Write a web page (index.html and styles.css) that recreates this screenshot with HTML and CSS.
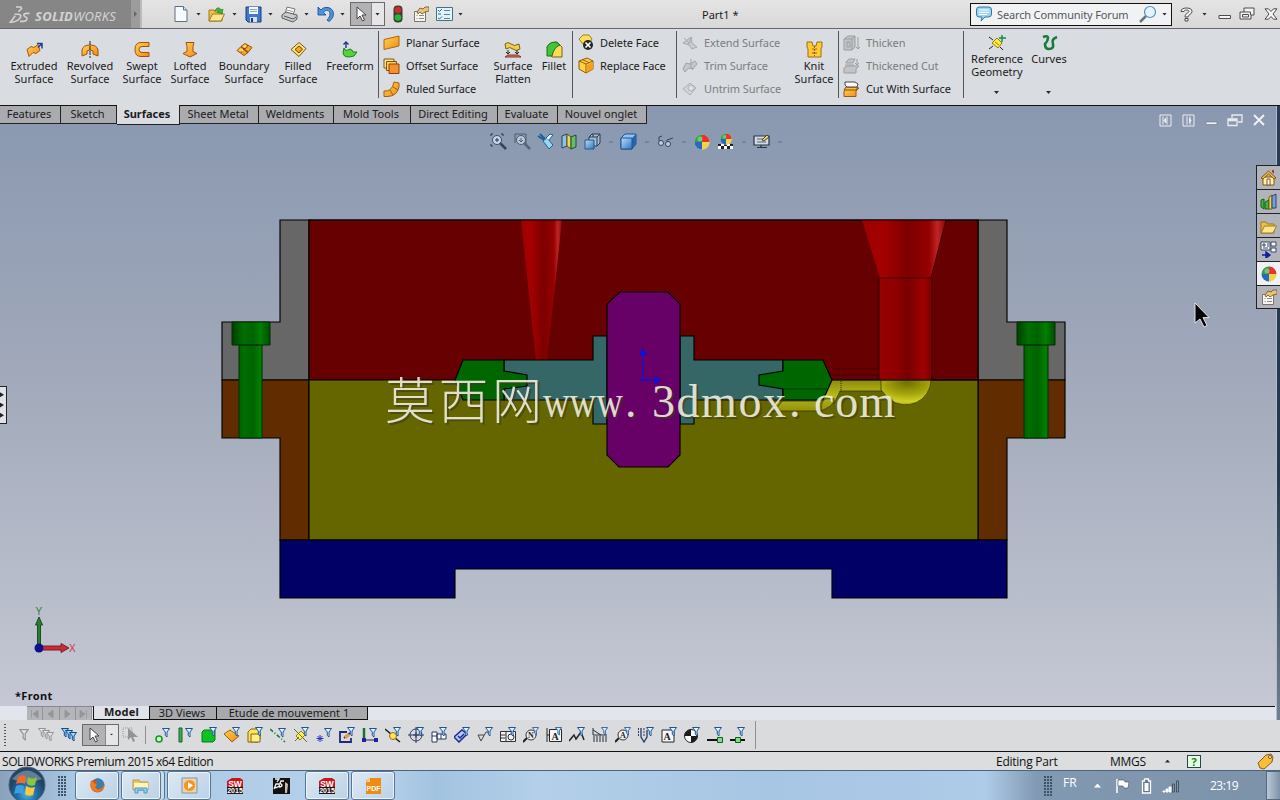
FILE: index.html
```
<!DOCTYPE html>
<html lang="en">
<head>
    <meta charset="UTF-8">
    <meta name="viewport" content="width=device-width, initial-scale=1.0">
    <title>Part1 - SOLIDWORKS</title>
    <link rel="stylesheet" href="styles.css">
</head>
<body>
    <!-- shared icon shapes -->
    <svg class="defs" width="0" height="0">
        <defs>
            <linearGradient id="gold" x1="0" y1="0" x2="1" y2="1"><stop offset="0" stop-color="#ffd257"/><stop offset="1" stop-color="#f08a12"/></linearGradient>
            <linearGradient id="sky" x1="0" y1="0" x2="1" y2="1"><stop offset="0" stop-color="#b9defa"/><stop offset="1" stop-color="#2f76c4"/></linearGradient>
        </defs>
        <symbol id="funnel" viewBox="0 0 8 10"><path d="M.5.5h7L5 4v5L3.300 7.500V4z" fill="#e4f3ff" stroke="#1c5596"/></symbol>
        <symbol id="cursor" viewBox="0 0 12 16"><path d="M2 1v12l3-3 2.500 5 2-1L7 9h4z" fill="#fff" stroke="#444"/></symbol>
        <symbol id="ball" viewBox="0 0 16 16"><circle cx="8" cy="8" r="7.500" fill="#ddd"/><path d="M8 8V.5A7.500 7.500 0 0 0 .5 8z" fill="#35a045"/><path d="M8 8V.5A7.500 7.500 0 0 1 15.500 8z" fill="#e5342b"/><path d="M8 8H.5A7.500 7.500 0 0 0 8 15.500z" fill="#2868bd"/><path d="M8 8h7.500A7.500 7.500 0 0 1 8 15.500z" fill="#f1d34a"/><circle cx="6" cy="5" r="2.500" fill="#fff" opacity=".35"/></symbol>
        <symbol id="props" viewBox="0 0 16 16"><path d="M1.500 5.500h11v10h-11z" fill="#f6f5f0" stroke="#77766f"/><path d="M3.500 9.500h1m1.500 0h5m-7.500 3h1m1.500 0h5" stroke="#8b8b8b"/><path d="M4 6l3-4 3 1 2-2h4v4l-4 1-3 2-2-2-2 2z" fill="#e9c27a" stroke="#6c4e24" stroke-width=".8"/></symbol>
        <symbol id="restore" viewBox="0 0 16 14"><path d="M5 1h10v7h-3v4H1V5h4z" fill="#f3f3f5" stroke="#4c4c4e"/><path d="M5 5h6.500v3M3.500 7.500h6v2.500h-6z" fill="none" stroke="#4c4c4e"/></symbol>
        <symbol id="close" viewBox="0 0 14 12"><path d="M1 .8h3.500L7 3.500 9.500.8H13L9 6l4 5.200H9.500L7 8.500 4.500 11.200H1L5 6z" fill="#f5f5f7" stroke="#4c4c4e"/></symbol>
        <symbol id="min" viewBox="0 0 14 12"><path d="M1 7.500h11.500v3H1z" fill="#f5f5f7" stroke="#4c4c4e"/></symbol>
        <symbol id="open" viewBox="0 0 18 16"><path d="M1 15V4h5l1.500 2H14v9z" fill="#f0bf45" stroke="#a07a1c"/><path d="M1 15l3.500-7h12L13 15z" fill="#ffe68d" stroke="#a07a1c"/></symbol>
        <symbol id="swbox" viewBox="0 0 16 16"><path d="M0 3l5-3h8l3 2v8H0z" fill="#c8161c"/><path d="M0 9h16v7H0z" fill="#1c1415"/></symbol>
    </svg>

    <header class="titlebar">
        <div class="brand">
            <svg width="30" height="22" viewBox="0 0 30 22"><path d="M10 1h6l1 2-4 4M8 10h4c5 0 5 3 2 6-3 3-6 4-11 4l6-8M27 9h-4c-4 0-4 2-2 4l2 1c2 2 0 5-4 5h-4" fill="none" stroke="#d2d2d2" stroke-width="2"/></svg>
            <span><b>SOLID</b>WORKS</span>
        </div>
        <div class="brand-arrow"></div>
        <div class="quick">
            <span class="tool"><svg width="14" height="16" viewBox="0 0 14 16"><path d="M1 .5h8.500l3.500 3.500v11.500H1z" fill="#f6fbff" stroke="#5c6f80"/><path d="M9.500.5V4H13" fill="#cfe0ee" stroke="#5c6f80"/></svg></span><i class="drop"></i>
            <span class="tool"><svg width="18" height="16"><use href="#open"/><path d="M7 5c1-4 5-4 6-1l2-1-1 5-5-2 2-1c-1-1-2-1-4 0z" fill="#43b438" stroke="#1c7a1c" stroke-width=".6"/></svg></span><i class="drop"></i>
            <span class="tool"><svg width="17" height="17" viewBox="0 0 17 17"><path d="M1 1h15v15H3l-2-2z" fill="#3f79cf" stroke="#173b85"/><path d="M4 1h9v7H4z" fill="#f4f8fc"/><path d="M5 3.500h7M5 5.500h7" stroke="#8aa4c4"/><path d="M5 11h7v5H5z" fill="#d7dfe8"/><path d="M6 12h2v4H6z" fill="#173b85"/></svg></span><i class="drop"></i>
            <span class="tool"><svg width="17" height="17" viewBox="0 0 17 17"><path d="M4 8l2-7 8 2-2 6z" fill="#fff" stroke="#777"/><path d="M1 9l4-3 11 3v4l-4 3-11-4z" fill="#c9ccd0" stroke="#55585c"/><path d="M3 10l9 3 3-2" fill="none" stroke="#55585c"/><path d="M6 4l6 1.500" stroke="#999"/></svg></span><i class="drop"></i>
            <span class="tool"><svg width="17" height="16" viewBox="0 0 17 16"><path d="M1 1v8h8L6.500 6.500C9 3 13 4 13 8c0 2-1 4-3 6l2 1.500c7-5 5-13-1-14C8 1 5.500 2 4 4z" fill="#4f93dd" stroke="#1c5199" stroke-width=".9"/></svg></span><i class="drop"></i>
        </div>
        <div class="picker"><span><svg width="12" height="16"><use href="#cursor"/></svg></span><i class="drop"></i></div>
        <svg class="traffic" width="10" height="18" viewBox="0 0 10 18"><rect x=".5" y=".5" width="9" height="17" rx="4" fill="#3b3b3b"/><circle cx="5" cy="5" r="3.300" fill="#d22b26"/><circle cx="5" cy="12.500" r="3.300" fill="#21b835"/></svg>
        <svg class="opt" width="16" height="16"><use href="#props"/></svg>
        <svg class="opt" width="17" height="16" viewBox="0 0 17 16"><path d="M.5 1.500h16v13H.5z" fill="#e4f3fb" stroke="#42708f"/><path d="M2 4l1.500 1.500L6 3M2 8h3m-3 4l1.500 1L6 10.500" fill="none" stroke="#1b7291"/><path d="M8 4.500h6m-6 4h6m-6 4h6" stroke="#52859f"/></svg>
        <i class="drop"></i>
        <div class="doc-title">Part1 *</div>
        <div class="search">
            <svg width="16" height="16" viewBox="0 0 16 16"><path d="M3 1h10q2.500 0 2.500 3v4q0 3-3 3H9l-4 4 1-4H3Q.5 11 .5 8V4Q.5 1 3 1z" fill="#9fd3ef" stroke="#277cab"/><path d="M3 4h10M3 6.300h10M3 8.500h8" stroke="#fff"/></svg>
            <span>Search Community Forum</span>
            <svg width="18" height="18" viewBox="0 0 18 18"><path d="M7 11l-6 6" stroke="#657585" stroke-width="2.500"/><circle cx="11" cy="7" r="5.500" fill="#e4f5ff" stroke="#5591bd" stroke-width="1.200"/></svg>
            <i class="drop"></i>
        </div>
        <div class="winctl">
            <svg width="13" height="15" viewBox="0 0 13 15"><path d="M1 4.500Q1 1 6.500 1T12 4.500c0 3-4 3-4 5.500H5c0-4 4-4 4-5.500 0-2-5-2-5 0zM5 11.500h3V14H5z" fill="#f5f5f7" stroke="#4c4c4e"/></svg>
            <i class="drop"></i>
            <svg width="14" height="12"><use href="#min"/></svg>
            <svg width="16" height="14"><use href="#restore"/></svg>
            <svg width="14" height="12"><use href="#close"/></svg>
        </div>
    </header>

    <section class="ribbon">
        <div class="group first">
            <div class="big w56"><svg width="17" height="16" viewBox="0 0 17 16"><path d="M1 8l4-3 3 1 4-3 2 6-4 3-3-1-4 4z" fill="url(#gold)" stroke="#a45a0c"/><path d="M11 2h5v5M16 2l-4 4" fill="none" stroke="#233f8e" stroke-width="1.500"/></svg>Extruded<br>Surface</div>
            <div class="big w56"><svg width="18" height="17" viewBox="0 0 18 17"><path d="M1 15V9q1-5 8-5t8 5v6l-5-2v-3q-3-2-6 0v3z" fill="url(#gold)" stroke="#a4500c"/><path d="M9 0v17" stroke="#222" stroke-dasharray="4 1"/></svg>Revolved<br>Surface</div>
            <div class="big w48"><svg width="16" height="16" viewBox="0 0 16 16"><path d="M15 1v4H8Q5 5 5 8t3 3h7v4H7Q1 15 1 8t6-7z" fill="url(#gold)" stroke="#a4500c"/></svg>Swept<br>Surface</div>
            <div class="big w48"><svg width="16" height="16" viewBox="0 0 16 16"><path d="M4 1h8l-1 4v5l4 2-7 3.500L1 12l4-2V5z" fill="url(#gold)" stroke="#a4500c"/></svg>Lofted<br>Surface</div>
            <div class="big w60"><svg width="17" height="16" viewBox="0 0 17 16"><path d="M1 9l4-4 4-3 7 4-4 5-4 3z" fill="url(#gold)" stroke="#a4500c"/><path d="M5 5l7 6M12 4l-7 7" stroke="#8c430a" stroke-width="1.300"/><path d="M7 5l2-1.500L11 5 9 6.500zM4 8.500L6 7l2 2-2 1.500z" fill="#ffdc7c"/></svg>Boundary<br>Surface</div>
            <div class="big w48"><svg width="17" height="16" viewBox="0 0 17 16"><path d="M1 8l8-7 7 6-7 8z" fill="#ffe47b" stroke="#7c5512"/><path d="M5 8l4-3.500L12.500 7.500 9 11.500z" fill="#f5a81b" stroke="#5c430e"/></svg>Filled<br>Surface</div>
            <div class="big w56"><svg width="16" height="17" viewBox="0 0 16 17"><path d="M2 7q1 4 6 1 3 1 3 3h4l-3 4q-10 3-11-3z" fill="#5bd139" stroke="#168020"/><path d="M4 7V1M1.500 3.500L4 1l2.500 2.500" fill="none" stroke="#1e3983" stroke-width="1.400"/></svg>Freeform</div>
        </div>
        <div class="group g2">
            <div class="list">
                <div class="row"><svg width="17" height="16" viewBox="0 0 17 16"><path d="M1 4.500L16 1v10L1 14.500z" fill="url(#gold)" stroke="#b0660e"/></svg>Planar Surface</div>
                <div class="row"><svg width="17" height="16" viewBox="0 0 17 16"><path d="M1 1h10v9H1z" fill="#ffe59a" stroke="#80550e"/><path d="M3.500 3.500h10v9h-10z" fill="#ffcf5c" stroke="#80550e"/><path d="M6 6h10v9.500H6z" fill="#f6912a" stroke="#8c430e"/></svg>Offset Surface</div>
                <div class="row"><svg width="17" height="16" viewBox="0 0 17 16"><path d="M11 1l5 1v4q-2 9-11 9.500H1V10q8 1 10-9z" fill="url(#gold)" stroke="#a4600e"/><path d="M10 6l5 3M7 9l3 5" stroke="#a4600e"/></svg>Ruled Surface</div>
            </div>
            <div class="big w48"><svg width="18" height="17" viewBox="0 0 18 17"><path d="M1 3q3-3 6 0t8 0l1 5q-4 3-7 0t-7 0z" fill="#f2d043" stroke="#74631e"/><path d="M4 9v4m9-4v4M2 11l2 2 2-2m5 0l2 2 2-2" fill="none" stroke="#222"/><path d="M1 16l3-2h10l3 2z" fill="#dc8165" stroke="#803420"/></svg>Surface<br>Flatten</div>
            <div class="big w34"><svg width="17" height="17" viewBox="0 0 17 17"><path d="M1 6l4-4 6-1 5 5v10H6z" fill="#ffda52" stroke="#7b640e"/><path d="M1 15V6q2-5 9-5l4 3q-6 2-8 11z" fill="#42c33a" stroke="#16721d"/></svg>Fillet</div>
        </div>
        <div class="group g3">
            <div class="list">
                <div class="row"><svg width="16" height="17" viewBox="0 0 16 17"><path d="M1 5l4-4h6l3 4-3 5H5z" fill="#ffdf59" stroke="#9b811d"/><circle cx="10" cy="11" r="5" fill="#252525"/><path d="M7.500 8.500l5 5m0-5l-5 5" stroke="#fff" stroke-width="1.700"/></svg>Delete Face</div>
                <div class="row"><svg width="16" height="17" viewBox="0 0 16 17"><path d="M1 4l8-3 6 3v8l-7 4-7-4z" fill="#ffd240" stroke="#8d5a0b"/><path d="M1 4l7 3v9M8 7l7-3M4 2.500l7 3" fill="none" stroke="#a45a0b"/><path d="M9 8l6-3v7l-6 3z" fill="#f69f1c"/></svg>Replace Face</div>
            </div>
        </div>
        <div class="group g4">
            <div class="list">
                <div class="row off"><svg width="16" height="16" viewBox="0 0 16 16"><path d="M1 8l8-6 1 6 5 4-5 2-3-4z" fill="#c9cacc" stroke="#a8a9ac"/><path d="M2 3l5 5m3-6l-4 8" stroke="#a8a9ac"/></svg>Extend Surface</div>
                <div class="row off"><svg width="16" height="16" viewBox="0 0 16 16"><path d="M1 11l3-6 4 1 5-3 2 3-4 5-4-1-4 4z" fill="#c5c6c9" stroke="#a3a4a7"/><path d="M9 1v8l2 3" fill="none" stroke="#a3a4a7"/></svg>Trim Surface</div>
                <div class="row off"><svg width="16" height="16" viewBox="0 0 16 16"><path d="M1 8l7-6 6 5-6 7z" fill="#d3d4d7" stroke="#b0b1b4"/><circle cx="9" cy="7" r="3" fill="#dfe0e2" stroke="#b0b1b4"/></svg>Untrim Surface</div>
            </div>
            <div class="big w48 knit"><svg width="17" height="17" viewBox="0 0 17 17"><path d="M1 1h5l1 4h3l1-4h5v5l-1 2v8H2V8L1 6z" fill="#ffcb38" stroke="#a26d0b"/><path d="M8.500 5v10M6 8h5m-5 4h5" stroke="#a05a0b" stroke-dasharray="2 1"/></svg>Knit<br>Surface</div>
        </div>
        <div class="group g5">
            <div class="list">
                <div class="row off"><svg width="17" height="16" viewBox="0 0 17 16"><path d="M1 4l4-3h7v11l-3 3H1z" fill="#c3c4c7" stroke="#9c9da0"/><path d="M1 4h8v11M9 4l3-3M15 2v12m-2-2l2 2 2-2M4 7h3v5H4z" fill="none" stroke="#9c9da0"/></svg>Thicken</div>
                <div class="row off"><svg width="17" height="16" viewBox="0 0 17 16"><path d="M1 10l3-2h12l-3 3v4H1zM3 4l3-3h6l-2 4H3z" fill="#c3c4c7" stroke="#9c9da0"/><path d="M2 7h9m3-6v6m-2-2l2 2 2-2" fill="none" stroke="#9c9da0"/></svg>Thickened Cut</div>
                <div class="row"><svg width="17" height="16" viewBox="0 0 17 16"><path d="M1 10l3-3h12l-3 3v5.500H1z" fill="url(#gold)" stroke="#a4560e"/><path d="M3 6h12l-2 3H1z" fill="#ffb933" stroke="#855014"/><path d="M2 1h10l3 2-1 3H4L2 4z" fill="#fafafa" stroke="#444"/></svg>Cut With Surface</div>
            </div>
        </div>
        <div class="group g6">
            <div class="big w54 menu"><svg width="18" height="17" viewBox="0 0 18 17"><path d="M4 9l5-5 5 5-4 5z" fill="#ffec35" stroke="#8f7c16"/><path d="M1 3l4 3m-4 9l4-3m7 1l3 3" stroke="#222"/><path d="M14 1v7m-3-4h7" stroke="#14854d" stroke-width="1.400"/><path d="M7 8l4 3" stroke="#a2811d"/></svg>Reference<br>Geometry<i class="drop"></i></div>
            <div class="big w50 menu"><svg width="17" height="17" viewBox="0 0 17 17"><path d="M2 3q5-2 5 1 0 3-3 6 0 5 4 5 5 0 4-5-2-5 4-7" fill="none" stroke="#187a3b" stroke-width="2.600"/></svg>Curves<i class="drop"></i></div>
        </div>
    </section>

    <main class="viewport">
        <nav class="tabs">
            <a class="t1">Features</a><a class="t2">Sketch</a><a class="t3 active">Surfaces</a><a class="t4">Sheet Metal</a><a class="t5">Weldments</a><a class="t6">Mold Tools</a><a class="t7">Direct Editing</a><a class="t8">Evaluate</a><a class="t9">Nouvel onglet</a>
            <div class="docctl">
                <svg width="13" height="13" viewBox="0 0 13 13"><path d="M1 1h11v11H1z" fill="none" stroke="#eceef2"/><path d="M8 2.500v8M4 2.500v8M7 4L5 6.500 7 9" stroke="#eceef2" fill="#eceef2"/></svg>
                <svg width="13" height="13" viewBox="0 0 13 13"><path d="M1 1h11v11H1z" fill="none" stroke="#eceef2"/><path d="M5 2.500v8M8 2.500v8M7 4l2 2.500L7 9" stroke="#eceef2" fill="#eceef2"/></svg>
                <svg class="low" width="13" height="12"><path d="M1 8h11v2.500H1z" fill="#eff1f4" stroke="#66728a" stroke-width=".6"/></svg>
                <svg width="16" height="13" viewBox="0 0 16 13"><path d="M5 4V1h10v7h-4M1 5h9v6.500H1zM1 6.500h9" fill="none" stroke="#e9ebef" stroke-width="1.300"/></svg>
                <svg width="12" height="12" viewBox="0 0 12 12"><path d="M1 1l10 10M11 1L1 11" stroke="#f1f2f5" stroke-width="1.900"/></svg>
            </div>
        </nav>

        <div class="headsup">
            <span><svg width="17" height="17" viewBox="0 0 17 17"><path d="M10 10l6 6" stroke="#31425a" stroke-width="2.500"/><circle cx="7" cy="7" r="4.500" fill="#c4d7e8" stroke="#3c4e68"/><path d="M1 3V1h2m8 0h2v2M1 11v2h2m2-6h4m-2-2v4" fill="none" stroke="#27354b"/></svg></span>
            <span><svg width="17" height="17" viewBox="0 0 17 17"><path d="M10 10l6 6" stroke="#56657a" stroke-width="2.500"/><circle cx="7" cy="7" r="4.500" fill="#bac8d8" stroke="#4d5c71"/><path d="M1 1h11v10M1 1v9M7 5v4m-2-2l2 2 2-2" fill="none" stroke="#4d5c71"/></svg></span>
            <span><svg width="17" height="17" viewBox="0 0 17 17"><path d="M1 3l6 4M3 1l5 5" stroke="#206395" stroke-width="2"/><path d="M6 8l4-3 6 7-4 4z" fill="#9ad6f2" stroke="#206395"/><path d="M9 5l4-4 3 1-4 5" fill="#dff3ff" stroke="#245e87"/></svg></span>
            <span><svg width="16" height="17" viewBox="0 0 16 17"><path d="M1 3l5-2v12l-5 2z" fill="#8fc3e6" stroke="#23405e"/><path d="M6 1l4 3v12l-4-3z" fill="#f1d850" stroke="#575021"/><path d="M10 4l5-2v12l-5 2z" fill="#65bb73" stroke="#244d37"/></svg></span>
            <span><svg width="17" height="17" viewBox="0 0 17 17"><path d="M5 4l3-3h8v9l-3 3H5zM5 4h8v9M13 4l3-3M9 1v3" fill="#a9bed5" stroke="#26394f"/><path d="M1 7h9v9H1z" fill="url(#sky)" stroke="#275887"/></svg></span>
            <i></i>
            <span><svg width="17" height="17" viewBox="0 0 17 17"><path d="M1 5l4-4h11v10l-4 5H1z" fill="#90c5f3" stroke="#205292"/><path d="M12 5l4-4v10l-4 5z" fill="#2764ac"/><path d="M1 5h11v11H1z" fill="url(#sky)" stroke="#205292"/></svg></span>
            <i></i>
            <span><svg width="17" height="13" viewBox="0 0 17 13"><path d="M2 6V2l3-1m5 6V5l6-2" fill="none" stroke="#354559"/><circle cx="4" cy="8" r="2.500" fill="#bfd0df" stroke="#354559"/><circle cx="11" cy="9" r="2.500" fill="#bfd0df" stroke="#354559"/></svg></span>
            <i></i>
            <span><svg width="16" height="16"><use href="#ball"/></svg></span>
            <span><svg width="17" height="17" viewBox="0 0 17 17"><path d="M1 11h15v5H1z" fill="#fff"/><path d="M1 11h3v2h3v-2h3v2h3v-2h3v2h-3v3h-3v-3H7v3H4v-3H1z" fill="#202020"/><use href="#ball" x="3" y="0" width="12" height="12"/></svg></span>
            <i></i>
            <span><svg width="18" height="15" viewBox="0 0 18 15"><path d="M1 2h15v9H1zM4 13.500h10M8 11v2" fill="#d3dae2" stroke="#273445" stroke-width="1.200"/><path d="M4 5h8M4 8h9" stroke="#56636f"/><path d="M9 6l5-5 2 2-5 4z" fill="#ecd266" stroke="#4c4625"/></svg></span>
            <i></i>
        </div>

        <!-- mould section view, drawn in window pixels -->
        <svg class="scene" width="1280" height="601" viewBox="0 105 1280 601">
            <defs>
                <linearGradient id="bolt"><stop offset="0" stop-color="#003e00"/><stop offset=".3" stop-color="#007000"/><stop offset=".55" stop-color="#006200"/><stop offset=".75" stop-color="#008000"/><stop offset="1" stop-color="#004c00"/></linearGradient>
                <linearGradient id="sprue"><stop offset="0" stop-color="#a00000"/><stop offset=".25" stop-color="#a40000"/><stop offset=".55" stop-color="#7c0000"/><stop offset=".8" stop-color="#960000"/><stop offset=".9" stop-color="#c02525"/><stop offset="1" stop-color="#850808"/></linearGradient>
                <linearGradient id="tube"><stop offset="0" stop-color="#980000"/><stop offset=".3" stop-color="#8f0000"/><stop offset=".55" stop-color="#780000"/><stop offset=".85" stop-color="#a00000"/><stop offset="1" stop-color="#7c0000"/></linearGradient>
                <radialGradient id="bulb" cx=".52" cy=".1" r=".9"><stop offset="0" stop-color="#6f6f00"/><stop offset=".5" stop-color="#a3a30c"/><stop offset=".85" stop-color="#d0d024"/><stop offset="1" stop-color="#a2a210"/></radialGradient>
                <linearGradient id="runner" x2="0" y2="1"><stop offset="0" stop-color="#8c8c08"/><stop offset=".5" stop-color="#b9b920"/><stop offset="1" stop-color="#929208"/></linearGradient>
            </defs>
            <g stroke="#000" stroke-width="1.150">
                <path d="M280 220h29v160h-87v-58h58zM1007 220h-29v160h87v-58h-58z" fill="#676767"/>
                <path d="M222 380h87v160h-29V438h-58zM1065 380h-87v160h29V438h58z" fill="#602c00"/>
                <path d="M309 220h669v160H309z" fill="#670000"/>
                <path d="M309 380h669v160H309z" fill="#666600"/>
                <path d="M280 540h727v58H832v-29H455v29H280z" fill="#000067"/>
            </g>
            <g stroke="#003000">
                <path d="M232 322h38v23h-38zM239 345h23v93h-23z" fill="url(#bolt)"/>
                <path d="M1017 322h38v23h-38zM1024 345h24v93h-24z" fill="url(#bolt)"/>
            </g>
            <path d="M521 220h41l-15 140h-11z" fill="url(#sprue)"/>
            <path d="M862 220h84l-15 58h-51z" fill="url(#sprue)"/>
            <path d="M880 278h51v102h-51z" fill="url(#tube)"/>
            <path d="M880 278h51M878 278v102M932 278v102M946 220l-15 58" stroke="#3d0000" fill="none"/>
            <path d="M832 369h46M832 375h46" stroke="#4f0000"/>
            <path d="M882 380v11h-42q-7 20-24 20h-46l8-10h40l12-21z" fill="url(#runner)" stroke="#383800" stroke-width=".8"/>
            <path d="M881 380h50a25.500 25 0 0 1-42 19l-8-9z" fill="url(#bulb)" stroke="#383800" stroke-width=".8"/>
            <path d="M841 369v23" stroke="#332800" stroke-dasharray="1 1"/>
            <path d="M309 220h669M832 380h146" stroke="#0a0000"/>
            <g stroke="#000" stroke-width="1.150">
                <path d="M504 360h89v-24h14v88h-14v-24h-89zM783 360h-89v-24h-14v88h14v-24h89z" fill="#356767"/>
                <path d="M463 360h41v11l23 4v11l-23 3v11h-41l-8-20z" fill="#006700"/>
                <path d="M823 360h-40v11l-24 4v10l24 4v11h40l9-20z" fill="#006700"/>
                <path d="M620 292h48l12 12v151l-12 12h-49l-12-12V304z" fill="#670067"/>
            </g>
            <path d="M783 389h44" stroke="#003b00"/>
            <path d="M643 379v-28m-3 4l3-6 3 6zM640 380h15m0-3l5 3-5 3z" fill="#1111ec" stroke="#1111cf" stroke-width="1.300"/>
            <g class="watermark">
                <text class="cjk" x="385" y="419" textLength="157">莫西网</text>
                <text transform="translate(543 417) scale(.8 1)">www</text>
                <text x="625" y="417">.</text>
                <text x="652" y="417" textLength="134">3dmox</text>
                <text x="789" y="417">.</text>
                <text x="814" y="417" textLength="81">com</text>
            </g>
            <g class="triad">
                <path d="M37.500 647v-22h-2l3.500-8 3.500 8h-2v22z" fill="#2c7b34" stroke="#174f1e"/>
                <path d="M40 646h21v-2.500l8 4.500-8 4.500V650H40z" fill="#c22d3a" stroke="#8b1824"/>
                <circle cx="39" cy="648" r="4.500" fill="#10108c"/>
                <text x="35.500" y="615" fill="#367c3d">Y</text>
                <text x="69" y="652" fill="#ce3443">X</text>
            </g>
            <path d="M1195 303v20l5-4 4 8 3-1.500-4-8h6z" fill="#050505" stroke="#eee" stroke-width=".9"/>
        </svg>

        <div class="flyout"><i></i><i></i><i></i></div>
        <div class="view-name">*Front</div>
        <div class="edge"></div>
        <aside class="taskpane">
            <span><svg width="17" height="17" viewBox="0 0 17 17"><path d="M3 8h11v8H3z" fill="#ffefaa" stroke="#80571a"/><path d="M1 9l7.500-7L16 9l-2 1-5.500-5L3 10z" fill="#f0b74b" stroke="#80571a"/><path d="M7 10h3v6H7z" fill="#fff" stroke="#80571a"/><path d="M12 1h2v4l-2-2z" fill="#bd3422"/></svg></span>
            <span><svg width="17" height="17" viewBox="0 0 17 17"><path d="M1 7l3-1v10l-3-2zM5 9l4-2v9H5z" fill="#45b044" stroke="#14621b"/><path d="M9 4l3-2v14H9z" fill="#f0d64f" stroke="#6f5a13"/><path d="M12 3l4-2v14h-4z" fill="#7a9ed4" stroke="#2b457c"/></svg></span>
            <span><svg width="18" height="16"><use href="#open"/></svg></span>
            <span><svg width="17" height="17" viewBox="0 0 17 17"><path d="M1 1h9v8H1zM11 1h5v4h-5zm0 6h5v4h-5z" fill="#f6f8fb" stroke="#394862"/><path d="M3 3h2v2H3zm4 0h2M7 5h2M3 7h5" fill="none" stroke="#394862"/><path d="M2 14h7m-3-3l4 3-4 3z" fill="#121ba2" stroke="#121ba2" stroke-width="1.400"/></svg></span>
            <span class="on"><svg width="16" height="16"><use href="#ball"/></svg></span>
            <span><svg width="16" height="16"><use href="#props"/></svg></span>
        </aside>
    </main>

    <section class="doctabs">
        <div class="nav">
            <b><svg width="9" height="8"><path d="M1.500 0v8M8 0L3 4l5 4z"/></svg></b>
            <b><svg width="6" height="8"><path d="M5 0L0 4l5 4z"/></svg></b>
            <b><svg width="6" height="8"><path d="M1 0l5 4-5 4z"/></svg></b>
            <b><svg width="9" height="8"><path d="M7.500 0v8M1 0l5 4-5 4z"/></svg></b>
        </div>
        <a class="model">Model</a><a class="views">3D Views</a><a class="motion">Etude de mouvement 1</a>
        <div class="rest"></div>
    </section>

    <section class="filters">
        <div class="grip"></div>
        <span class="gray"><svg width="10" height="12"><use href="#funnel"/></svg></span>
        <span class="gray"><svg width="17" height="16"><use href="#funnel" x="0" y="1" width="8" height="10"/><use href="#funnel" x="4" y="3" width="8" height="10"/><use href="#funnel" x="8" y="5" width="8" height="10"/></svg></span>
        <span class="deep"><svg width="17" height="16"><use href="#funnel" x="0" y="1" width="8" height="10"/><use href="#funnel" x="4" y="3" width="8" height="10"/><use href="#funnel" x="8" y="5" width="8" height="10"/></svg></span>
        <div class="picker"><span><svg width="12" height="16"><use href="#cursor"/></svg></span><i class="drop"></i></div>
        <span class="pick2"><svg width="17" height="16" viewBox="0 0 17 16"><path d="M1 1h9v9H1z" fill="none" stroke="#999" stroke-dasharray="1 1"/><path d="M6 1v12l3-3 2 5 2-1-2-4h5z" fill="#929395"/></svg></span>
        <div class="line"></div>
        <span><svg width="16" height="16"><circle cx="4" cy="12" r="3" fill="#d4ffd4" stroke="#109a27" stroke-width="1.600"/><use href="#funnel" x="7" y="1" width="8" height="10"/></svg></span>
        <span><svg width="16" height="16"><path d="M1 1h3v14H1z" fill="#3fb04e" stroke="#1a5e25"/><use href="#funnel" x="7" y="1" width="8" height="10"/></svg></span>
        <span><svg width="16" height="16"><path d="M1 5l2-2h11v10l-2 2H1z" fill="#0fc224" stroke="#0a7c19"/><use href="#funnel" x="8" y="0" width="8" height="10"/></svg></span>
        <span><svg width="16" height="16"><path d="M0 7l6-4 9 6-7 6z" fill="url(#gold)" stroke="#a45a0c"/><use href="#funnel" x="8" y="0" width="8" height="10"/></svg></span>
        <span><svg width="16" height="16"><path d="M1 5l3-3h9v10l-2 3H1z" fill="#ffe358" stroke="#81640d"/><path d="M4 7h9v8H4z" fill="#ffef87" stroke="#81640d"/><use href="#funnel" x="8" y="0" width="8" height="10"/></svg></span>
        <span><svg width="16" height="16"><path d="M0 2l15 13" stroke="#197d37" stroke-width="1.600" stroke-dasharray="4 2 1 2"/><use href="#funnel" x="8" y="1" width="8" height="10"/></svg></span>
        <span><svg width="16" height="16"><path d="M3 9l5-5 4 4-5 5z" fill="#fff252" stroke="#8b801b"/><path d="M1 2l13 13M2 14l4-4" stroke="#706921"/><use href="#funnel" x="8" y="0" width="8" height="10"/></svg></span>
        <span><svg width="16" height="16"><path d="M4 8v7M.5 11.500h7M1.500 9l5 5m0-5l-5 5" stroke="#2830be"/><use href="#funnel" x="8" y="1" width="8" height="10"/></svg></span>
        <span><svg width="16" height="16"><path d="M8 5H1v10h11v-4M5 11l6-5" fill="none" stroke="#1e297e" stroke-width="1.800"/><path d="M5 9l4-3 2 3-4 3z" fill="#e69e40"/><use href="#funnel" x="8" y="0" width="8" height="10"/></svg></span>
        <span><svg width="16" height="16"><path d="M2 1v12" fill="none" stroke="#14762b" stroke-width="2.500"/><path d="M2 13h12" stroke="#202073"/><path d="M0 11h4v4H0zM12 11h4v4h-4z" fill="#22229a"/><use href="#funnel" x="7" y="1" width="8" height="10"/></svg></span>
        <span><svg width="16" height="16"><path d="M0 2l6 5m4 4l5 4" stroke="#222" stroke-width="1.600"/><circle cx="8" cy="9" r="3.500" fill="#ffe25e" stroke="#906e0f"/><use href="#funnel" x="8" y="0" width="8" height="10"/></svg></span>
        <span><svg width="16" height="16"><circle cx="8" cy="8" r="6" fill="none" stroke="#303b67"/><path d="M8 0v16M0 8h16M5 8h6M8 5v6" stroke="#303b67"/><use href="#funnel" x="8" y="0" width="8" height="10"/></svg></span>
        <span><svg width="16" height="16"><path d="M1 5h5v10H1zM1 9h5M6 7h9v5H6zM10 7v5" fill="#fff" stroke="#253864"/><use href="#funnel" x="8" y="0" width="8" height="10"/></svg></span>
        <span><svg width="16" height="16"><path d="M0 10l8-7 5 4-8 8z" fill="#b6cdf6" stroke="#202b91" stroke-width="1.500"/><path d="M4 9l2 2 4-4" fill="none" stroke="#202b91" stroke-width="1.500"/><use href="#funnel" x="8" y="0" width="8" height="10"/></svg></span>
        <span><svg width="16" height="16"><path d="M1 8h6M1 8l3 6 5-9h3" fill="none" stroke="#444"/><use href="#funnel" x="8" y="0" width="8" height="10"/></svg></span>
        <span><svg width="16" height="16"><path d="M.5 4.500h15v10H.5zM6 5v10M.5 8h5m-5 3h5" fill="#f4f4f5" stroke="#303030"/><circle cx="11" cy="10" r="3" fill="none" stroke="#303030"/><use href="#funnel" x="8" y="0" width="8" height="10"/></svg></span>
        <span><svg width="16" height="16"><path d="M0 15l4-4" stroke="#222" stroke-width="2"/><circle cx="8" cy="8" r="5" fill="#f2f3f6" stroke="#343434"/><text x="8" y="11" class="glyph">N</text><use href="#funnel" x="9" y="0" width="7" height="9"/></svg></span>
        <span><svg width="16" height="16"><path d="M3.500 2.500h12v12h-12zM1 1v14M1 8h3" fill="#f8f8fa" stroke="#242424"/><text x="9" y="13" class="glyph big-a">A</text><use href="#funnel" x="9" y="0" width="7" height="9"/></svg></span>
        <span><svg width="16" height="16"><path d="M0 14l5-6 2 4 5-7 3 8" fill="none" stroke="#222" stroke-width="1.500"/><use href="#funnel" x="8" y="0" width="8" height="10"/></svg></span>
        <span><svg width="16" height="16"><path d="M1 1v7h14M1 3l8 5M2 9v6m3-6v6m3-6v6m3-6v6m3-6v6" fill="none" stroke="#262e3f"/><use href="#funnel" x="9" y="0" width="7" height="9"/></svg></span>
        <span><svg width="16" height="16"><path d="M0 15l4-4" stroke="#222" stroke-width="2"/><circle cx="8" cy="8" r="5" fill="#f2f3f6" stroke="#343434"/><text x="8" y="11" class="glyph">A</text><use href="#funnel" x="9" y="0" width="7" height="9"/></svg></span>
        <span><svg width="16" height="16"><path d="M3 1v9l3 5 3-5V3" fill="none" stroke="#283b66" stroke-width="1.300"/><path d="M.5 1v9M6 1v9" stroke="#283b66" stroke-dasharray="2 1"/><use href="#funnel" x="8" y="0" width="8" height="10"/></svg></span>
        <span><svg width="16" height="16"><path d="M1 3h12v12H1z" fill="#f8f8fa" stroke="#242424"/><text x="6" y="13" class="glyph big-a">A</text><use href="#funnel" x="8" y="0" width="8" height="10"/></svg></span>
        <span><svg width="16" height="16"><circle cx="7" cy="9" r="6.500" fill="#fff" stroke="#222"/><path d="M7 9V2.500A6.500 6.500 0 0 0 .5 9zM7 9v6.500A6.500 6.500 0 0 0 13.500 9z" fill="#1c1c1c"/><use href="#funnel" x="8" y="0" width="8" height="10"/></svg></span>
        <span><svg width="16" height="16"><path d="M0 13h11" stroke="#111" stroke-width="2"/><path d="M10.500 10.500h5v5h-5z" fill="#83dc88" stroke="#115f20"/><use href="#funnel" x="7" y="0" width="8" height="10"/></svg></span>
        <span><svg width="16" height="16"><path d="M0 13h15" stroke="#111" stroke-width="2"/><path d="M5.500 10.500h5v5h-5z" fill="#83dc88" stroke="#115f20"/><use href="#funnel" x="7" y="0" width="8" height="10"/></svg></span>
        <div class="line end"></div>
    </section>

    <footer class="status">
        <span class="edition">SOLIDWORKS Premium 2015 x64 Edition</span>
        <span class="editing">Editing Part</span>
        <span class="units">MMGS</span>
        <i class="drop up"></i>
        <span class="help">?</span>
        <svg width="17" height="17" viewBox="0 0 17 17"><path d="M1 10l8-8 5-1 2 3-1 5-8 7-4-1z" fill="#f9bd36" stroke="#896014"/><circle cx="13" cy="4" r="1.500" fill="#fff" stroke="#6c5420"/></svg>
    </footer>

    <footer class="taskbar">
        <svg class="orb" width="40" height="38" viewBox="0 0 40 38">
            <defs><radialGradient id="glass" cx=".5" cy=".75"><stop offset="0" stop-color="#43bce9"/><stop offset=".55" stop-color="#226ca3"/><stop offset="1" stop-color="#234564"/></radialGradient></defs>
            <circle cx="20" cy="19" r="18" fill="url(#glass)" stroke="#47637f"/>
            <path d="M5 13q15-17 30 0-15 7-30 0z" fill="#fff" opacity=".3"/>
            <path d="M11 11q4-3 8-1l-1 8q-4-2-9 0z" fill="#ee6a2e"/><path d="M21 11q4 3 9 0l-2 8q-4 2-8-1z" fill="#8cc63c"/>
            <path d="M9 20q4-2 8 0l-1 8q-4-2-9 0z" fill="#3b9fe0"/><path d="M19 20q4 3 9 1l-2 8q-4 2-8-1z" fill="#fcca37"/>
        </svg>
        <div class="dots"></div>
        <div class="app a1"><svg width="17" height="17"><circle cx="8.500" cy="8.500" r="7" fill="#d9501e"/><path d="M5 3q5-4 9 1l1 5-3 3q-6 0-6-4l3-2z" fill="#2f83b5"/><path d="M2 3q-3 10 6 12 6 0 8-8l-3 4q-4 4-7-1l2-2-3-2z" fill="#ef7b22"/></svg></div>
        <div class="app a2"><svg width="18" height="16"><path d="M1 2h6l1 2h8v8H1z" fill="#e7c768" stroke="#bd9a45"/><path d="M2 5h14v6H2z" fill="#fff4b9"/><path d="M3 15v-5h12v5h-3v-3H6v3z" fill="#8fcfee" stroke="#5297bd"/></svg></div>
        <div class="app a3"><svg width="17" height="17"><path d="M1 1h15v15H1z" fill="#e6d5b0" stroke="#8595a3"/><circle cx="8.500" cy="8.500" r="5.500" fill="#f6941e"/><path d="M7 5l5 3.500L7 12z" fill="#fff"/></svg></div>
        <div class="bare b1"><svg width="16" height="16"><use href="#swbox"/><text x="8" y="8.500" class="swtext">SW</text><text x="8" y="15" class="swyear">2015</text></svg></div>
        <div class="bare b2"><svg width="17" height="16"><path d="M0 0h17v16H0z" fill="#111"/><path d="M2 1h4L4 4M1 10q7-1 5-4H3L1 11M11 3H8L7 5l2 2q0 2-3 2" fill="none" stroke="#f4f4f4" stroke-width="1.300"/><path d="M12 4l3 2-1 9h-2z" fill="#c9bdb5"/></svg></div>
        <div class="app a4"><svg width="16" height="16"><use href="#swbox"/><text x="8" y="8.500" class="swtext">SW</text><text x="8" y="15" class="swyear">2015</text></svg></div>
        <div class="app a5"><svg width="17" height="18"><path d="M1 4l4-3h11v16H1z" fill="#f18a13"/><path d="M5 1v4H1z" fill="#ffd28e"/><text x="8.500" y="13.500" class="pdf">PDF</text></svg></div>
        <div class="tray">
            <div class="dots"></div>
            <span class="lang">FR</span>
            <i class="drop up"></i>
            <svg class="flag" width="15" height="16"><path d="M2 1v14" stroke="#fff" stroke-width="1.500"/><path d="M3 2h6l1 2h4l-1 6H9L8 8H3z" fill="#fff" stroke="#3d4e5f" stroke-width=".6"/></svg>
            <svg class="battery" width="11" height="16"><path d="M3.500 1h4v2h2v12h-8V3h2z" fill="#617689" stroke="#fff" stroke-width="1.300"/><path d="M3.500 5h4v8h-4z" fill="#fff"/></svg>
            <svg class="signal" width="17" height="14"><path d="M1 12h2v1H1zm3-2h2v3H4zm3-2h2v5H7z" fill="#fff" stroke="#fff"/><path d="M10.500 5h2v8h-2zm4-3h2v11h-2z" fill="#899cae" stroke="#435363"/></svg>
            <span class="clock">23:19</span>
        </div>
        <div class="show-desktop"></div>
    </footer>
</body>
</html>
```
FILE: styles.css
```
* {
    box-sizing: border-box;
    margin: 0;
    padding: 0;
}

body {
    width: 1280px;
    height: 800px;
    overflow: hidden;
    font-family: "Noto Sans", "Open Sans", sans-serif;
    font-size: 11px;
    color: #1b1b1d;
    background-color: #d9dbde;
}

svg {
    display: block;
    flex: none;
}

.defs {
    position: absolute;
}

.drop {
    flex: none;
    width: 5px;
    height: 3px;
    margin: 0 4px 0 3px;
    background-color: #2c2c2e;
    clip-path: polygon(0 0, 100% 0, 50% 100%);
}

.drop.up {
    clip-path: polygon(50% 0, 100% 100%, 0 100%);
}

/* title bar */
.titlebar {
    display: flex;
    align-items: center;
    height: 29px;
    background: linear-gradient(#e4e4e4, #d9d9da);
    border-bottom: 1px solid #696674;
}

.brand {
    display: flex;
    align-items: center;
    width: 131px;
    height: 28px;
    padding: 2px 0 0 8px;
    background-color: #868686;
    color: #d2d2d2;
    font-style: italic;
    font-size: 13px;
    letter-spacing: .25px;
}

.brand span {
    padding-top: 2px;
}

.brand svg {
    width: 24px;
    margin-right: 3px;
}

.brand-arrow {
    width: 11px;
    height: 28px;
    padding: 11px 0 0 3px;
    background-color: #9c9c9c;
    border-right: 2px solid #bbb;
}

.brand-arrow::before {
    content: "";
    display: block;
    width: 3px;
    height: 6px;
    background-color: #666;
    clip-path: polygon(0 0, 100% 50%, 0 100%);
}

.quick {
    display: flex;
    align-items: center;
    width: 181px;
    margin-left: 27px;
}

.tool {
    display: flex;
    justify-content: center;
    width: 24px;
}

.picker {
    display: flex;
    align-items: center;
    width: 35px;
    height: 24px;
    border: 1px solid #6a6a6c;
    background-color: #e6e6e8;
}

.picker span {
    display: flex;
    align-items: center;
    justify-content: center;
    width: 22px;
    height: 22px;
    background-color: #b2b2b4;
    border-right: 1px solid #88888a;
}

.traffic {
    margin: 0 10px 0 8px;
}

.opt {
    margin-right: 7px;
}

.opt + .opt {
    margin-right: 2px;
}

.doc-title {
    width: 268px;
    margin-left: 235px;
    padding-top: 1px;
}

.search {
    display: flex;
    align-items: center;
    width: 202px;
    height: 23px;
    padding-left: 5px;
    border: 1px solid #111;
    background-color: #f1f2f4;
    color: #56575b;
}

.search span {
    width: 147px;
    padding-left: 5px;
    letter-spacing: -.15px;
}

.search .drop {
    margin-left: 5px;
}

.winctl {
    display: flex;
    align-items: center;
    margin-left: 8px;
}

.winctl .drop {
    margin: 0 11px 0 9px;
}

.winctl svg + svg {
    margin-left: 7px;
}

.winctl svg:last-child {
    margin-left: 9px;
}

/* ribbon */
.ribbon {
    display: flex;
    height: 77px;
    padding-top: 2px;
    background-color: #d9dce0;
    border-bottom: 1px solid #111;
}

.group {
    display: flex;
    height: 67px;
    border-right: 1px solid #55565b;
}

.first {
    padding-left: 6px;
    width: 379px;
}

.g2 {
    width: 194px;
}

.g3 {
    width: 104px;
}

.g4 {
    width: 162px;
}

.g5 {
    width: 125px;
}

.g6 {
    border: none;
    padding-left: 6px;
}

.big {
    display: flex;
    flex-direction: column;
    align-items: center;
    flex: none;
    padding-top: 10px;
    line-height: 13px;
    text-align: center;
    white-space: nowrap;
}

.big svg {
    height: 17px;
    margin-bottom: 1px;
}

.w34 { width: 34px; }
.w48 { width: 48px; }
.w50 { width: 50px; }
.w54 { width: 54px; }
.w56 { width: 56px; }
.w60 { width: 60px; }

.menu {
    position: relative;
    padding-top: 3px;
}

.menu .drop {
    position: absolute;
    left: 50%;
    top: 60px;
    margin-left: -3px;
}

.list {
    width: 110px;
    padding-left: 4px;
    letter-spacing: -.08px;
}

.g3 .list,
.g4 .list {
    padding-left: 5px;
}

.knit {
    margin-left: 3px;
}

.row {
    display: flex;
    align-items: center;
    height: 23px;
    gap: 6px;
    white-space: nowrap;
}

.off {
    color: #7b7d82;
}

/* viewport */
.viewport {
    position: relative;
    height: 600px;
    background: linear-gradient(#8998b0, #a1a9ba 45%, #c5c8d4);
}

.tabs {
    display: flex;
    height: 20px;
}

.tabs a {
    height: 18px;
    padding: 1px 2px 0 0;
    line-height: 14px;
    text-align: center;
    background-color: #a9abae;
    border-right: 1px solid #222;
    border-bottom: 1px solid #222;
}

.tabs .active {
    height: 20px;
    margin-top: -1px;
    padding-top: 2px;
    font-weight: bold;
    background-color: #d9dce0;
}

.t1 { width: 61px; }
.t2 { width: 56px; }
.t3 { width: 63px; }
.t4 { width: 79px; }
.t5 { width: 75px; }
.t6 { width: 77px; }
.t7 { width: 87px; }
.t8 { width: 60px; }
.t9 { width: 89px; }

.docctl {
    display: flex;
    align-items: center;
    gap: 10px;
    margin-left: 512px;
    padding-top: 8px;
}

.docctl .low {
    margin-right: -1px;
}

.headsup {
    display: flex;
    align-items: center;
    height: 31px;
    padding-left: 487px;
}

.headsup span {
    display: flex;
    justify-content: center;
    width: 23.4px;
}

.headsup i {
    width: 4px;
    height: 2px;
    margin: 0 4.600px;
    background-color: #77859c;
}

.scene {
    position: absolute;
    left: 0;
    top: -1px;
}

.watermark text {
    font-family: "Liberation Serif", serif;
    font-size: 46px;
    fill: #f4f3e2;
    fill-opacity: .88;
    text-shadow: 2px 2px 0 rgba(60, 60, 30, .7);
}

.watermark .cjk {
    font-family: "Noto Sans CJK SC", sans-serif;
    font-size: 50px;
    font-weight: 300;
}

.triad text {
    font-family: "Liberation Sans", sans-serif;
    font-size: 10px;
}

.flyout {
    position: absolute;
    left: 0;
    top: 280px;
    display: flex;
    flex-direction: column;
    justify-content: space-evenly;
    width: 7px;
    height: 38px;
    border: 1px solid #222;
    border-left: none;
    background-color: #dfe2e7;
}

.flyout i {
    width: 4px;
    height: 5px;
    background-color: #222;
    clip-path: polygon(0 0, 100% 50%, 0 100%);
}

.view-name {
    position: absolute;
    left: 15px;
    bottom: 3px;
    font-weight: bold;
    letter-spacing: .35px;
    color: #101010;
}

.edge {
    position: absolute;
    right: 0;
    top: 0;
    width: 4px;
    height: 614px;
    background: linear-gradient(#293b58, #23384a 60%, #718091);
    border-left: 1px solid #b3bdca;
}

.taskpane {
    position: absolute;
    right: 0;
    top: 59px;
    width: 24px;
    border: 1px solid #222;
    border-right: none;
}

.taskpane span {
    display: flex;
    align-items: center;
    justify-content: center;
    height: 24px;
    background-color: #b1b4ba;
    border-bottom: 1px solid #222;
}

.taskpane span:last-child {
    height: 22px;
    border: none;
}

.taskpane .on {
    background-color: #eff1f4;
}

/* document tabs */
.doctabs {
    display: flex;
    height: 14px;
    padding-left: 27px;
    background-color: #e2e6ec;
    line-height: 12px;
}

.nav {
    display: flex;
    width: 66px;
    border-top: 1px solid #888;
}

.nav b {
    display: flex;
    align-items: center;
    justify-content: center;
    width: 16.300px;
    background-color: #b4b5b8;
    border-right: 1px solid #929397;
}

.nav path {
    fill: #94969a;
    stroke: #94969a;
    stroke-width: .8;
}

.doctabs a {
    height: 14px;
    text-align: center;
    background-color: #a7a9ad;
    border: 1px solid #111;
    border-left: none;
    white-space: nowrap;
}

.doctabs .model {
    width: 57px;
    font-weight: bold;
    letter-spacing: .2px;
    background-color: #e0e3e8;
    border-top: none;
    border-left: 1px solid #111;
}

.views {
    width: 67px;
    padding-right: 2px;
}

.motion {
    width: 151px;
    padding-right: 6px;
}

.rest {
    width: 907px;
    border-top: 1px solid #111;
}

/* selection filters */
.filters {
    display: flex;
    align-items: center;
    height: 32px;
    padding-bottom: 2px;
    background-color: #dadbdd;
    border-bottom: 1px solid #111;
}

.filters > span {
    display: flex;
    justify-content: center;
    flex: none;
    width: 23px;
}

.filters .picker {
    width: 37px;
    height: 22px;
    margin-left: 1px;
}

.filters .picker span {
    width: 24px;
    height: 20px;
}

.filters .picker .drop {
    transform: scale(.7);
}

.grip {
    width: 2px;
    height: 22px;
    margin: 0 6px 0 4px;
    background: repeating-linear-gradient(#555 0 1px, transparent 1px 3px);
}

.gray {
    filter: grayscale(1);
    opacity: .5;
}

.deep {
    filter: saturate(1.6) brightness(.85);
}

.line {
    width: 1px;
    height: 18px;
    margin: 0 5px 0 3px;
    background-color: #8f9093;
}

.line.end {
    height: 28px;
    margin-left: 6px;
}

.glyph {
    font: bold 8px "Liberation Serif", serif;
    text-anchor: middle;
    fill: #222;
}

.big-a {
    font-size: 10px;
}

/* status bar */
.status {
    display: flex;
    align-items: center;
    height: 18px;
    font-family: "Open Sans", sans-serif;
    font-size: 12px;
    color: #111;
    background-color: #dbddde;
}

.edition {
    width: 994px;
    padding-left: 2px;
    letter-spacing: -.43px;
}

.editing {
    width: 116px;
    padding-left: 2px;
    letter-spacing: -.25px;
}

.units {
    width: 52px;
    letter-spacing: -.3px;
}

.help {
    width: 14px;
    height: 13px;
    margin: 0 56px 0 13px;
    border: 1px solid #26454e;
    background-color: #e4ffe4;
    color: #11812b;
    font-weight: bold;
    font-size: 11px;
    line-height: 11px;
    text-align: center;
}

/* windows taskbar */
.taskbar {
    position: relative;
    display: flex;
    align-items: center;
    height: 30px;
    border-top: 1px solid #4b647d;
    background: linear-gradient(90deg, #8aa2bb, #abc9e5 6%, #b5d0ea 30%, #a2c3df 34%, #b3cfe9 42%, #a7c6e3 60%, #aecbe8 77%, #8199b1 81%, #7c92a9);
}

.orb {
    position: relative;
    top: -1px;
    margin-left: 7px;
}

.dots {
    width: 9px;
    height: 20px;
    margin-left: 11px;
    background: radial-gradient(circle at 1px 1px, #3e536a .8px, transparent 1.100px) 0 0 / 3px 3px;
}

.app,
.bare {
    display: flex;
    align-items: center;
    justify-content: center;
    width: 44px;
    height: 29px;
}

.app {
    border: 1px solid #587691;
    border-radius: 3px;
    box-shadow: inset 0 0 0 1px #eaf4fc;
    background: linear-gradient(135deg, #dde9f4, #bad1e6);
}

.a1 { margin-left: 8px; }
.a2 { width: 40px; margin-left: 2px; box-shadow: inset 0 0 0 1px #eaf4fc, 3px 0 0 #c9dced, 4px 0 0 #587691; }
.a3 { margin-left: 6px; }
.b1 { margin-left: 2px; }
.b2 { margin-left: 2px; }
.a4 { margin-left: 2px; }
.a5 { margin-left: 2px; }

.swtext,
.swyear,
.pdf {
    font-family: "Liberation Sans", sans-serif;
    font-weight: bold;
    font-size: 8.5px;
    text-anchor: middle;
    fill: #fff;
}

.swyear,
.pdf {
    font-size: 7px;
}

.tray {
    display: flex;
    align-items: center;
    width: 222px;
    margin-left: auto;
    color: #fff;
    font-family: "Open Sans", sans-serif;
}

.tray .dots {
    margin-left: 0;
}

.lang {
    width: 28px;
    margin: -6px 0 0 10px;
    font-size: 12px;
}

.tray .drop {
    width: 7px;
    height: 4px;
    background-color: #fff;
}

.flag {
    margin-left: 10px;
}

.battery {
    margin-left: 11px;
}

.signal {
    margin-left: 10px;
}

.clock {
    margin-left: 31px;
    font-size: 12px;
    letter-spacing: -.5px;
}

.show-desktop {
    width: 14px;
    height: 29px;
    border: 1px solid #556b82;
    border-right: none;
    background: linear-gradient(90deg, #b9c8d7, #7d92a8);
}
```
